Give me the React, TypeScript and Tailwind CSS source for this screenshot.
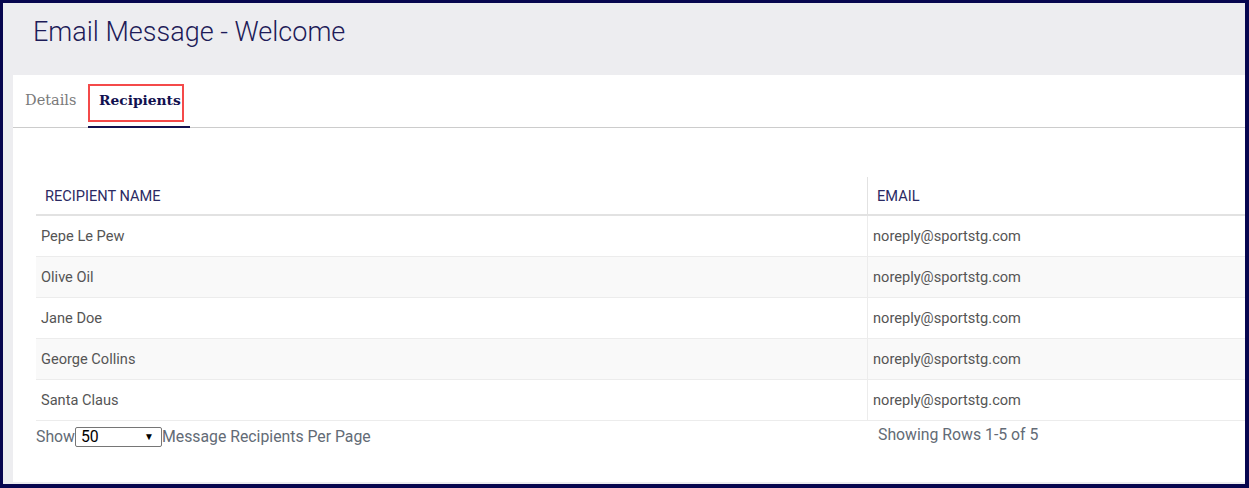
import React from "react";

const rows = [
  { name: "Pepe Le Pew", email: "noreply@sportstg.com" },
  { name: "Olive Oil", email: "noreply@sportstg.com" },
  { name: "Jane Doe", email: "noreply@sportstg.com" },
  { name: "George Collins", email: "noreply@sportstg.com" },
  { name: "Santa Claus", email: "noreply@sportstg.com" },
];

export default function App() {
  return (
    <div className="w-[1249px] h-[488px] border-t-[3px] border-l-[3px] border-r-4 border-b-4 border-[#07064f] bg-[#ededf0] flex flex-col overflow-hidden font-['Roboto',sans-serif]">
      <div className="h-[72px] shrink-0 pl-[30px] pt-[12px]">
        <h1 className="text-[27px] leading-[34px] font-light text-[#1d1b58]">
          Email Message - Welcome
        </h1>
      </div>
      <div className="flex-1 pl-[10px] pb-[2px] min-h-0">
        <div className="bg-white h-full flex flex-col overflow-hidden">
          <div className="h-[53px] shrink-0 border-b border-[#cccccc] flex items-end pl-[12px]">
            <div className="w-[51px] h-[44px] -mb-px pt-[6px] text-[14.5px] leading-[20px] text-[#7a7a7a] font-['DejaVu_Serif',serif]">
              Details
            </div>
            <div className="relative ml-[12px] w-[102px] h-[44px] -mb-px border-b-2 border-[#12114f] pt-[6px] pl-[11px] text-[13.8px] leading-[20px] font-bold text-[#12114f] font-['DejaVu_Serif',serif]">
              Recipients
              <div className="absolute left-0 top-0 w-[96px] h-[38px] border-2 border-[#f44a4a]" />
            </div>
          </div>
          <div className="ml-[23px] mt-[49px] grid grid-cols-[832px_1fr] text-[14.6px]">
            <div className="h-[39px] pt-[2px] border-b-2 border-r border-[#e2e2e2] flex items-center pl-[9px] text-[#2b2a63] uppercase">
              Recipient Name
            </div>
            <div className="h-[39px] pt-[2px] border-b-2 border-[#e2e2e2] flex items-center pl-[9px] text-[#2b2a63] uppercase">
              Email
            </div>
            {rows.map((r, i) => (
              <React.Fragment key={i}>
                <div
                  className={`h-[41px] pt-[2px] border-b border-r border-[#ececec] flex items-center pl-[5px] text-[#555555] ${
                    i % 2 === 1 ? "bg-[#f9f9f9]" : "bg-white"
                  }`}
                >
                  {r.name}
                </div>
                <div
                  className={`h-[41px] pt-[2px] border-b border-[#ececec] flex items-center pl-[5px] text-[#555555] ${
                    i % 2 === 1 ? "bg-[#f9f9f9]" : "bg-white"
                  }`}
                >
                  {r.email}
                </div>
              </React.Fragment>
            ))}
            <div className="h-[32px] flex items-center text-[15.8px] text-[#636b76]">
              <span>Show</span>
              <div className="relative w-[87px] h-[20px] border border-[#767676] rounded-[2px] flex items-center pl-[5px] text-black text-[15.8px]">
                50
                <span className="absolute right-[7px] top-[3px] text-[10px] leading-[12px]">▼</span>
              </div>
              <span>Message Recipients Per Page</span>
            </div>
            <div className="h-[28px] flex items-center pl-[10px] text-[15.8px] text-[#636b76]">
              Showing Rows 1-5 of 5
            </div>
          </div>
        </div>
      </div>
    </div>
  );
}
